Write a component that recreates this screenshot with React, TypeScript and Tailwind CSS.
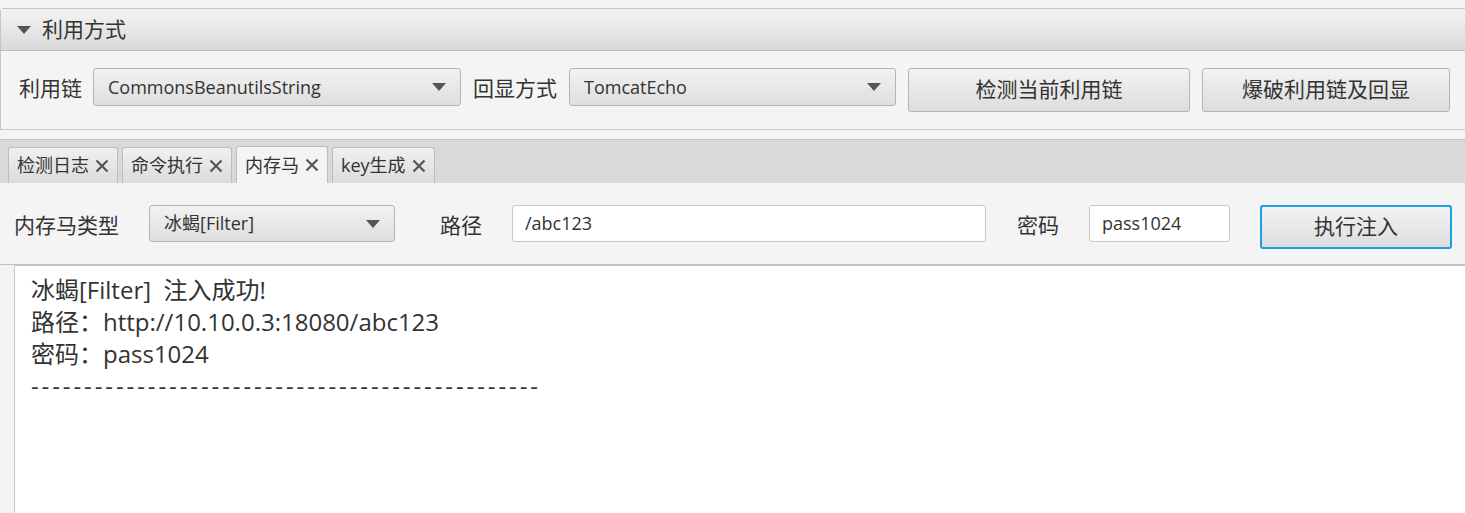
const font = { fontFamily: '"Open Sans", "Noto Sans CJK SC", sans-serif' };

const Caret = () => (
  <svg width="14" height="8" viewBox="0 0 14 8" className="shrink-0">
    <path d="M0 0 L14 0 L7 8 Z" fill="#555" />
  </svg>
);

const Combo = ({ value, className }: { value: string; className: string }) => (
  <div
    className={`flex shrink-0 items-center justify-between rounded-[3px] border border-[#b5b5b5] bg-gradient-to-b from-[#f2f2f2] to-[#dedede] pl-[14px] pr-[14px] text-[18px] text-[#333] ${className}`}
  >
    <span>{value}</span>
    <Caret />
  </div>
);

const Button = ({ label, className }: { label: string; className: string }) => (
  <div
    className={`flex shrink-0 items-center justify-center rounded-[3px] bg-gradient-to-b from-[#f3f3f3] to-[#dddddd] text-[21px] text-[#333] ${className}`}
  >
    {label}
  </div>
);

const Tab = ({ label, active }: { label: string; active?: boolean }) => (
  <div
    className={`flex h-[36px] items-center gap-[6px] rounded-t-[3px] border border-b-0 border-[#bdbdbd] pl-[8px] pr-[8px] text-[18px] text-[#333] ${
      active ? "h-[37px] bg-[#f4f4f4]" : "bg-gradient-to-b from-[#f0f0f0] to-[#dcdcdc]"
    }`}
  >
    <span>{label}</span>
    <svg width="14" height="14" viewBox="0 0 14 14">
      <path d="M1.5 1.5 L12.5 12.5 M12.5 1.5 L1.5 12.5" stroke="#555" strokeWidth="2.2" />
    </svg>
  </div>
);

export default function App() {
  return (
    <div className="h-[513px] w-[1465px] overflow-hidden bg-[#f4f4f4] pt-[8px]" style={font}>
      {/* 利用方式 titled pane */}
      <div className="rounded-tl-[4px] border-t border-l border-[#c6c6c6]">
        <div className="flex h-[42px] items-center gap-[11px] border-b border-[#bdbdbd] bg-gradient-to-b from-[#f3f3f3] to-[#dadada] pl-[16px]">
          <Caret />
          <span className="text-[21px] text-[#333]">利用方式</span>
        </div>
        <div className="flex h-[79px] items-start border-b border-[#c6c6c6] pt-[17px] pl-[18px] text-[21px] text-[#333]">
          <span className="mt-[5px] w-[74px] shrink-0">利用链</span>
          <Combo value="CommonsBeanutilsString" className="h-[38px] w-[368px]" />
          <span className="mt-[5px] ml-[12px] w-[96px] shrink-0">回显方式</span>
          <Combo value="TomcatEcho" className="h-[38px] w-[327px]" />
          <Button label="检测当前利用链" className="ml-[12px] h-[44px] w-[282px] border border-[#b5b5b5]" />
          <Button label="爆破利用链及回显" className="ml-[12px] h-[44px] w-[248px] border border-[#b5b5b5]" />
        </div>
      </div>

      {/* tab pane */}
      <div className="mt-[9px] flex h-[44px] items-end gap-[4px] border-t border-[#c6c6c6] bg-[#d9d9d9] pl-[8px]">
        <Tab label="检测日志" />
        <Tab label="命令执行" />
        <Tab label="内存马" active />
        <Tab label="key生成" />
      </div>
      <div className="flex h-[82px] items-start border-b border-[#c0c0c0] pt-[22px] pl-[14px] text-[21px] text-[#333]">
        <span className="mt-[5px] w-[135px] shrink-0">内存马类型</span>
        <Combo value="冰蝎[Filter]" className="h-[37px] w-[246px]" />
        <span className="mt-[5px] ml-[45px] w-[72px] shrink-0">路径</span>
        <div className="flex h-[37px] w-[474px] shrink-0 items-center rounded-[3px] border border-[#c8c8c8] bg-white pl-[12px] text-[18px]">
          /abc123
        </div>
        <span className="mt-[5px] ml-[31px] w-[72px] shrink-0">密码</span>
        <div className="flex h-[37px] w-[141px] shrink-0 items-center rounded-[3px] border border-[#c8c8c8] bg-white pl-[12px] text-[18px]">
          pass1024
        </div>
        <Button label="执行注入" className="ml-[30px] h-[44px] w-[192px] border-2 border-[#1e9fe0]" />
      </div>
      <div className="ml-[14px] h-[260px] border-t border-l border-[#c8c8c8] bg-white pt-[8px] pl-[16px] text-[24px] leading-[32px] text-[#333]">
        <div className="whitespace-pre">冰蝎[Filter]  注入成功!</div>
        <div>路径：http://10.10.0.3:18080/abc123</div>
        <div>密码：pass1024</div>
        <div className="tracking-[2.9px]">------------------------------------------------</div>
      </div>
    </div>
  );
}
